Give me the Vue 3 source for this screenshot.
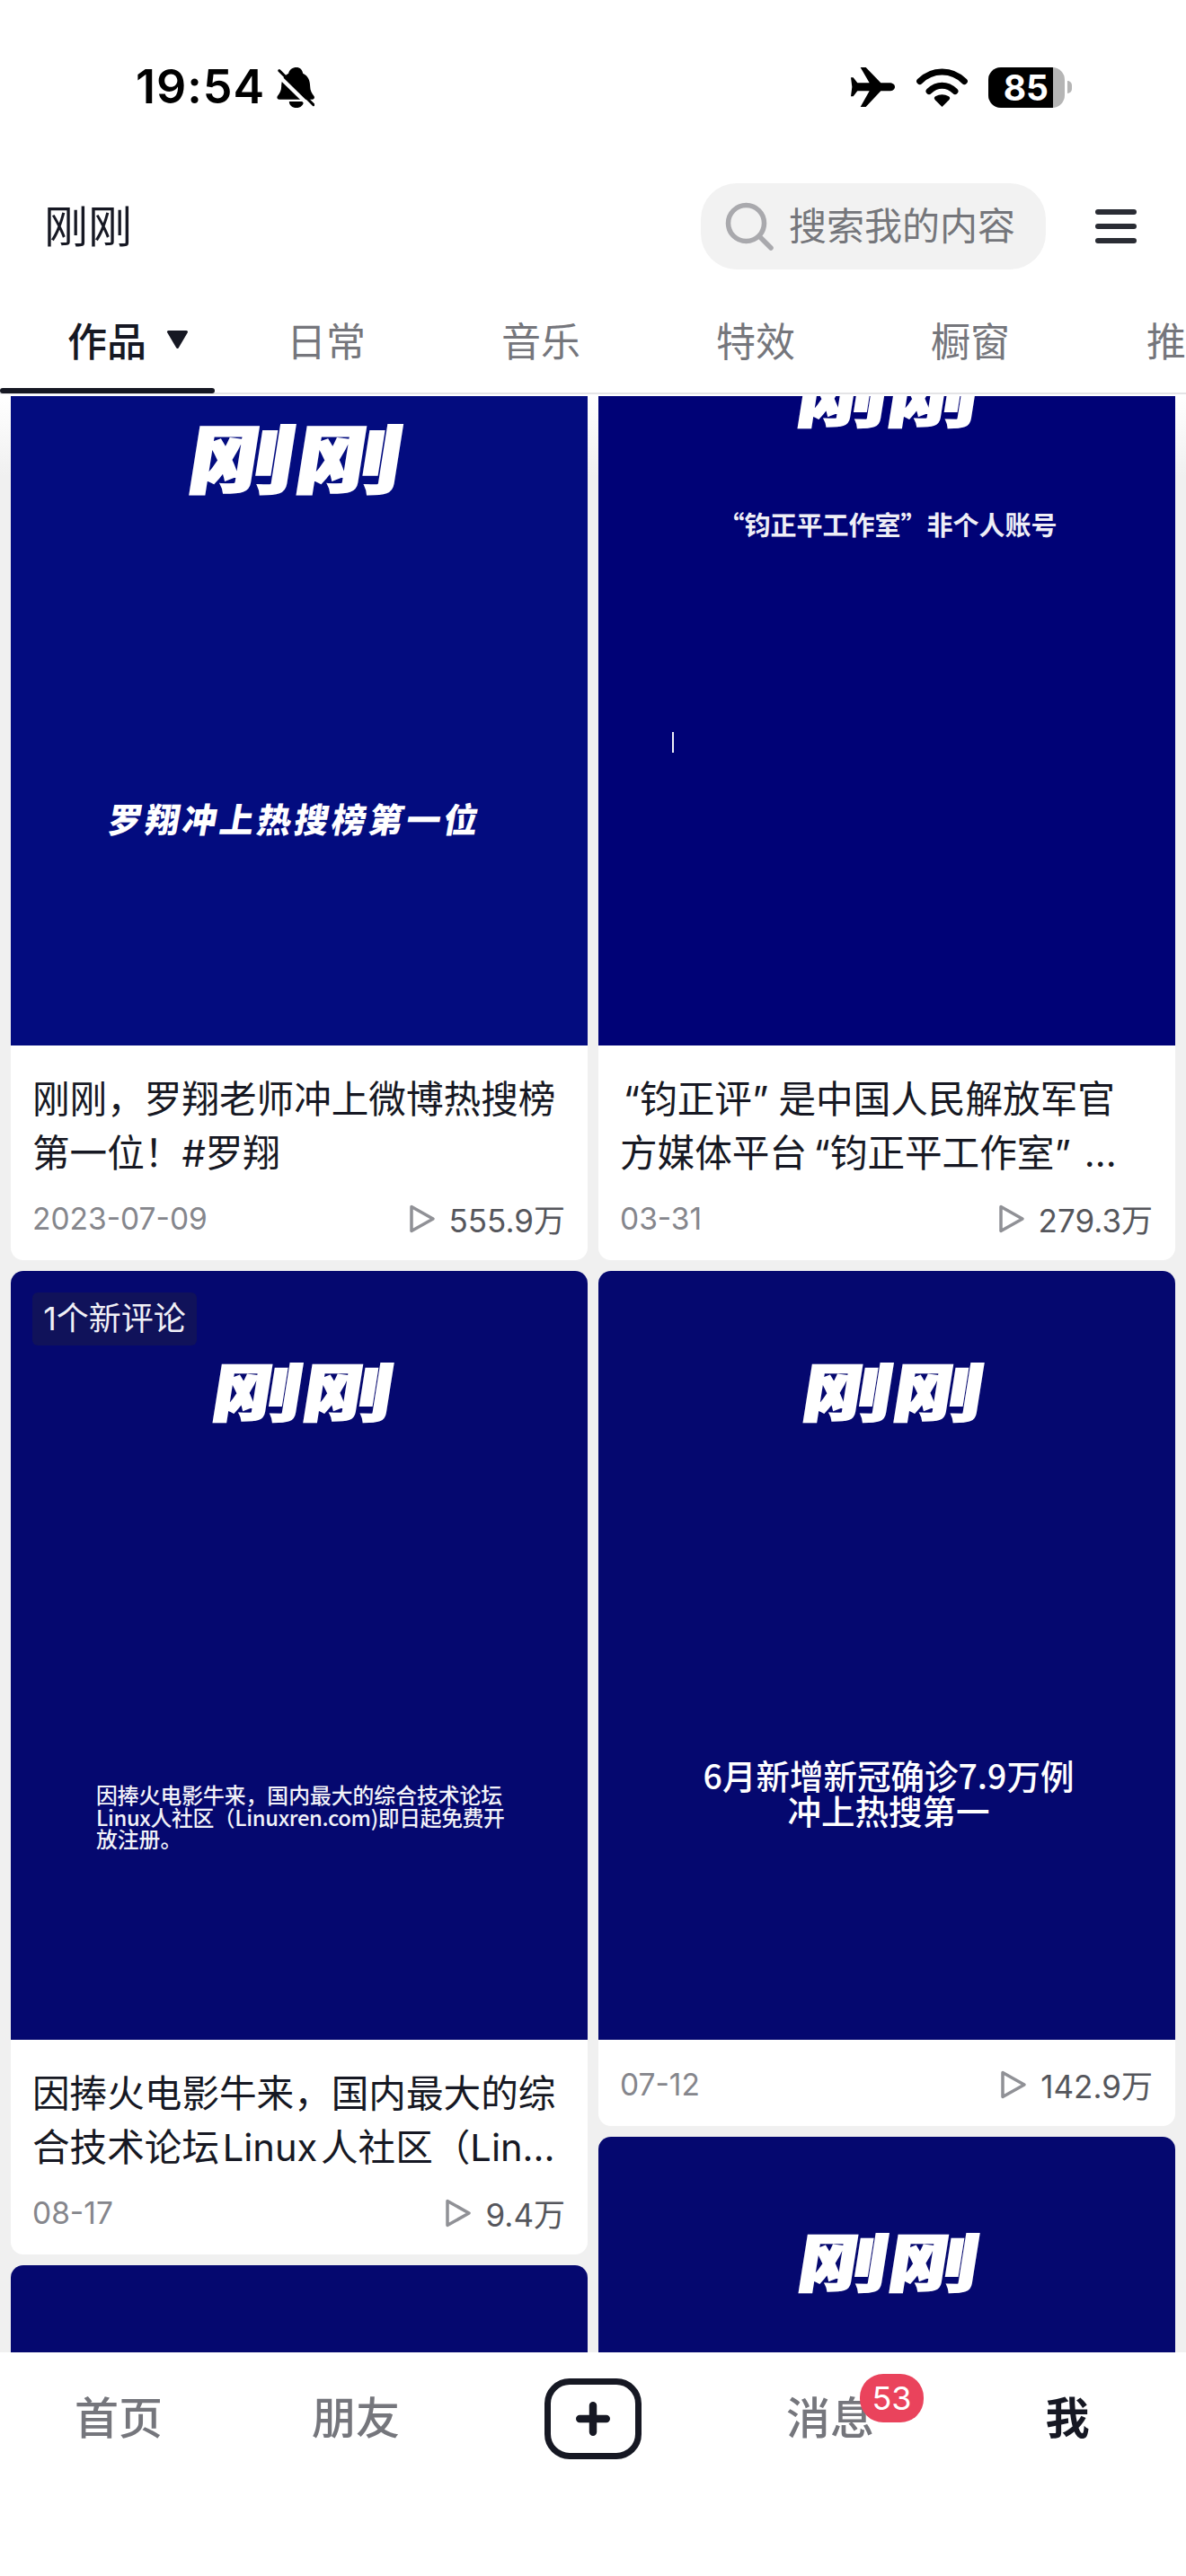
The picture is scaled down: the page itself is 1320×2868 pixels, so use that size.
<script setup>
const tabs = ['日常', '音乐', '特效', '橱窗', '推']
const columns = [
  [
    { id: 1, art: 'a1', logo: '刚刚', caption: ['罗翔冲上热搜榜第一位'], lines: ['刚刚，罗翔老师冲上微博热搜榜', '第一位！#罗翔'], date: '2023-07-09', views: '555.9万' },
    { id: 3, art: 'a3', tag: '1个新评论', logo: '刚刚', caption: ['因捧火电影牛来，国内最大的综合技术论坛', 'Linux人社区（Linuxren.com)即日起免费开', '放注册。'], lines: ['因捧火电影牛来，国内最大的综', '合技术论坛\u200ALinux\u200A人社区（Lin...'], date: '08-17', views: '9.4万' },
    { id: 6, art: 'a6', bare: true }
  ],
  [
    { id: 2, art: 'a2', logo: '刚刚', caption: ['“钧正平工作室”非个人账号'], cursor: true, lines: ['\u200A“钧正评”\u2009\u200A是中国人民解放军官', '方媒体平台\u2009“钧正平工作室”\u2009\u2009...'], date: '03-31', views: '279.3万' },
    { id: 4, art: 'a4', logo: '刚刚', caption: ['6月新增新冠确诊7.9万例', '冲上热搜第一'], lines: [], date: '07-12', views: '142.9万' },
    { id: 5, art: 'a5', logo: '刚刚', caption: [], bare: true }
  ]
]
</script>

<template>
  <div class="phone">
    <div class="status">
      <div class="status-left">
        <span class="time">19:54</span>
        <svg class="bell" viewBox="500 45 125 135" width="42" height="45">
          <path d="M565 45c12 0 20 8 22 20 18 8 24 26 24 44 0 14 6 24 13 32 3 5 1 11-6 11H508c-7 0-9-6-6-11 7-8 13-18 13-32 0-18 6-36 24-44 2-12 14-20 26-20z" fill="#000"/>
          <path d="M541 159h48c0 13-10 21-24 21s-24-8-24-21z" fill="#000"/>
          <path d="M497 65L615 180" stroke="#fff" stroke-width="13"/>
          <path d="M508 56L622 170" stroke="#000" stroke-width="9" stroke-linecap="round"/>
        </svg>
      </div>
      <div class="status-right">
        <svg class="plane" viewBox="50 48 147 132" width="49" height="44">
          <path d="M197 113c0 8-8 14-18 14H150L100 180H82L112 127H72L58 145H50L54 113 50 82H58L72 100H112L82 48H100L150 100H179C189 100 197 105 197 113Z" fill="#000"/>
        </svg>
        <svg class="wifi" viewBox="270 45 170 128" width="57" height="43">
          <path d="M281 88C322 46 388 46 429 88" fill="none" stroke="#000" stroke-width="21" stroke-linecap="round"/>
          <path d="M312 121C338 96 372 96 398 121" fill="none" stroke="#000" stroke-width="21" stroke-linecap="round"/>
          <path d="M355 173L332 150C327 145 329 141 333 138 347 130 363 130 377 138 381 141 383 145 378 150Z" fill="#000"/>
        </svg>
        <div class="battery">
          <div class="battery-body"><div class="battery-fill">85</div></div>
          <div class="battery-nub"></div>
        </div>
      </div>
    </div>

    <div class="topbar">
      <div class="name">刚刚</div>
      <div class="search">
        <svg class="search-icon" viewBox="0 0 54 54" width="54" height="54">
          <circle cx="23.500" cy="23.500" r="20" fill="none" stroke="#a9a9ad" stroke-width="5.500"/>
          <path d="M38 38L51 51" stroke="#a9a9ad" stroke-width="5.500" stroke-linecap="round"/>
        </svg>
        <span class="search-text">搜索我的内容</span>
      </div>
      <div class="menu"><i></i><i></i><i></i></div>
    </div>

    <div class="tabs">
      <div class="tab active">
        <span>作品</span>
        <svg viewBox="0 0 25 20" width="25" height="20"><path d="M2.500 1.500H22.500L12.500 18.500Z" fill="#161823" stroke="#161823" stroke-width="3" stroke-linejoin="round"/></svg>
      </div>
      <div v-for="t in tabs" :key="t" class="tab">{{ t }}</div>
    </div>

    <div class="feed">
      <div class="feed-inner">
        <div v-for="(col, ci) in columns" :key="ci" class="col">
          <div v-for="c in col" :key="c.id" class="card" :class="c.art">
            <div class="thumb">
              <div v-if="c.tag" class="tag">{{ c.tag }}</div>
              <div v-if="c.logo" class="logo"><span>{{ c.logo }}</span></div>
              <div v-if="c.caption && c.caption.length" class="caption">
                <div v-for="l in c.caption" :key="l">{{ l }}</div>
              </div>
              <div v-if="c.cursor" class="cursor"></div>
            </div>
            <div v-if="!c.bare" class="info">
              <div v-if="c.lines.length" class="title">
                <div v-for="l in c.lines" :key="l">{{ l }}</div>
              </div>
              <div class="meta">
                <span class="date">{{ c.date }}</span>
                <span class="views">
                  <svg viewBox="0 0 30 34" width="30" height="34"><path d="M3 3.500L27 17 3 30.500Z" fill="none" stroke="#909196" stroke-width="3.500" stroke-linejoin="round"/></svg>
                  <span>{{ c.views }}</span>
                </span>
              </div>
            </div>
          </div>
        </div>
      </div>
    </div>

    <div class="nav">
      <div class="nav-item">首页</div>
      <div class="nav-item">朋友</div>
      <div class="nav-item">
        <div class="add">
          <svg viewBox="0 0 36 36" width="38" height="38"><path d="M18 4V32M4 18H32" stroke="#161823" stroke-width="8" stroke-linecap="round"/></svg>
        </div>
      </div>
      <div class="nav-item"><span class="msg">消息<span class="badge">53</span></span></div>
      <div class="nav-item current">我</div>
    </div>
  </div>
</template>

<style scoped>
.phone {
  width: 1320px;
  height: 2868px;
  display: flex;
  flex-direction: column;
  overflow: hidden;
  background: #fff;
  color: #161823;
  font-family: Inter, "Noto Sans CJK SC", sans-serif;
}
.status {
  flex: none;
  height: 194px;
  display: flex;
  align-items: center;
  justify-content: space-between;
  padding: 0 127px 0 151px;
  box-sizing: border-box;
}
.status-left, .status-right { display: flex; align-items: center; }
.time { font-size: 52px; font-weight: 600; color: #000; line-height: 60px; letter-spacing: 1px; }
.bell { margin-left: 13px; }
.plane { margin-right: 24px; }
.wifi { margin-right: 23px; }
.battery { display: flex; align-items: center; }
.battery-body { width: 85px; height: 45px; border-radius: 14px; background: #b5b5b5; overflow: hidden; }
.battery-fill {
  width: 72px;
  height: 45px;
  background: #000;
  color: #fff;
  font-size: 39px;
  font-weight: 700;
  line-height: 45px;
  text-align: right;
  padding-right: 5px;
  box-sizing: border-box;
}
.battery-nub { width: 5px; height: 14px; margin-left: 3px; border-radius: 0 7px 7px 0; background: #b5b5b5; }

.topbar {
  flex: none;
  margin-top: 10px;
  height: 96px;
  display: flex;
  align-items: center;
  padding-left: 49px;
}
.name { font-size: 49px; line-height: 60px; margin-top: 2px; }
.search {
  margin-left: auto;
  width: 384px;
  height: 96px;
  border-radius: 40px;
  background: #f2f2f2;
  display: flex;
  align-items: center;
  padding-left: 27px;
  box-sizing: border-box;
}
.search-icon { flex: none; }
.search-text { margin-left: 17px; font-size: 42px; color: #75767b; line-height: 60px; white-space: nowrap; }
.menu {
  margin: 0 55px 0 55px;
  width: 46px;
  display: flex;
  flex-direction: column;
  gap: 10px;
}
.menu i { display: block; height: 6px; border-radius: 3px; background: #2a2c34; }

.tabs {
  flex: none;
  height: 141px;
  display: flex;
  overflow: hidden;
  box-sizing: border-box;
  position: relative;
  background: #fff;
}
.tabs::after { content: ""; position: absolute; left: 0; right: 0; top: 137px; height: 1.500px; background: #e4e4e6; }
.tab {
  flex: none;
  width: 239px;
  height: 137px;
  box-sizing: border-box;
  padding: 18px 0 0 9px;
  display: flex;
  align-items: center;
  justify-content: center;
  font-size: 44px;
  color: #75767c;
  position: relative;
}
.tab:last-child { width: 125px; justify-content: flex-start; padding-left: 81px; }
.tab.active { color: #161823; font-weight: 500; gap: 22px; padding-left: 46px; }
.tab.active::after {
  content: "";
  position: absolute;
  left: 0;
  right: 0;
  top: 132px;
  height: 6px;
  border-radius: 3px;
  background: #161823;
  z-index: 1;
}

.feed {
  flex: 1;
  min-height: 0;
  overflow: hidden;
  background: linear-gradient(#fff, #f0f0f0 90px);
  padding: 0 12px;
}
.feed-inner { display: flex; gap: 12px; margin-top: -133px; }
.col { flex: 1; min-width: 0; display: flex; flex-direction: column; gap: 12px; }
.card { background: #fff; border-radius: 14px; overflow: hidden; }
.thumb {
  height: 856px;
  position: relative;
  display: flex;
  flex-direction: column;
  align-items: center;
  color: #fff;
  background: #05086f;
}
.a1 .thumb { background: #030c7f; }
.a2 .thumb { background: #000276; }
.logo {
  height: 70px;
  margin-top: 96px;
  display: flex;
  align-items: center;
  justify-content: center;
  font-size: 71px;
  font-weight: 900;
  line-height: 70px;
  font-family: "Noto Sans CJK SC", sans-serif;
  -webkit-text-stroke: 1.500px #fff;
  transform: translateX(5px);
}
.logo span { display: inline-block; transform: skewX(-9deg) scaleX(1.42); }
.a1 .logo { height: 80px; margin-top: 159px; font-size: 84px; transform: translateX(-3px); }
.a2 .logo { transform: translateX(2px); }
.a4 .logo { transform: translateX(8px); }
.a5 .logo { transform: translateX(3px); margin-top: 101px; }
.caption { font-family: "Noto Sans CJK SC", sans-serif; font-weight: 700; white-space: nowrap; text-align: center; }
.a1 .caption {
  margin-top: 344px;
  font-size: 38px;
  line-height: 40px;
  letter-spacing: 3.500px;
  font-weight: 900;
  transform: translateX(-4px) skewX(-10deg);
}
.a2 .caption { margin-top: 91px; font-size: 29px; line-height: 36px; font-weight: 700; color: #eeeef6; transform: translateX(1px); }
.a3 .caption {
  margin-top: 405px;
  align-self: flex-start;
  margin-left: 95px;
  font-size: 23.800px;
  line-height: 24.500px;
  font-weight: 500;
  text-align: left;
  color: #f2f2f8;
}
.a3 .caption div:nth-child(2) { letter-spacing: -0.35px; }
.a4 .caption { margin-top: 375px; font-size: 37.500px; line-height: 39px; font-weight: 500; transform: translateX(2px); }
.cursor {
  position: absolute;
  left: 82px;
  top: 507px;
  width: 2px;
  height: 23px;
  background: #eeeef6;
}
.tag {
  position: absolute;
  left: 24px;
  top: 24px;
  height: 59px;
  width: 183px;
  border-radius: 6px;
  background: #10125a;
  color: #f0f0f6;
  font-size: 36px;
  line-height: 59px;
  text-align: center;
  white-space: nowrap;
}
.info { padding: 26px 25px 23px 24px; }
.title { margin: 4px 0 19px; font-size: 41.600px; line-height: 60px; white-space: nowrap; }
.meta { height: 47px; display: flex; align-items: center; justify-content: space-between; }
.date { font-size: 33.500px; color: #85868c; }
.views { display: flex; align-items: center; gap: 15px; font-size: 35px; color: #55565c; }

.nav {
  flex: none;
  height: 249px;
  box-sizing: border-box;
  padding-bottom: 101px;
  display: grid;
  grid-template-columns: repeat(5, 264px);
  background: #fff;
}
.nav-item {
  display: flex;
  align-items: center;
  justify-content: center;
  font-size: 49px;
  font-weight: 500;
  color: #75767c;
  line-height: 60px;
}
.nav-item.current { color: #161823; font-weight: 700; }
.add {
  width: 108px;
  height: 90px;
  box-sizing: border-box;
  border: 7px solid #161823;
  border-radius: 28px;
  display: flex;
  align-items: center;
  justify-content: center;
}
.msg { position: relative; display: inline-block; }
.badge {
  position: absolute;
  left: 82px;
  top: -20px;
  width: 71px;
  height: 54px;
  border-radius: 26px;
  background: #ea435c;
  color: #fff;
  font-size: 36px;
  font-weight: 400;
  line-height: 54px;
  text-align: center;
}
</style>
